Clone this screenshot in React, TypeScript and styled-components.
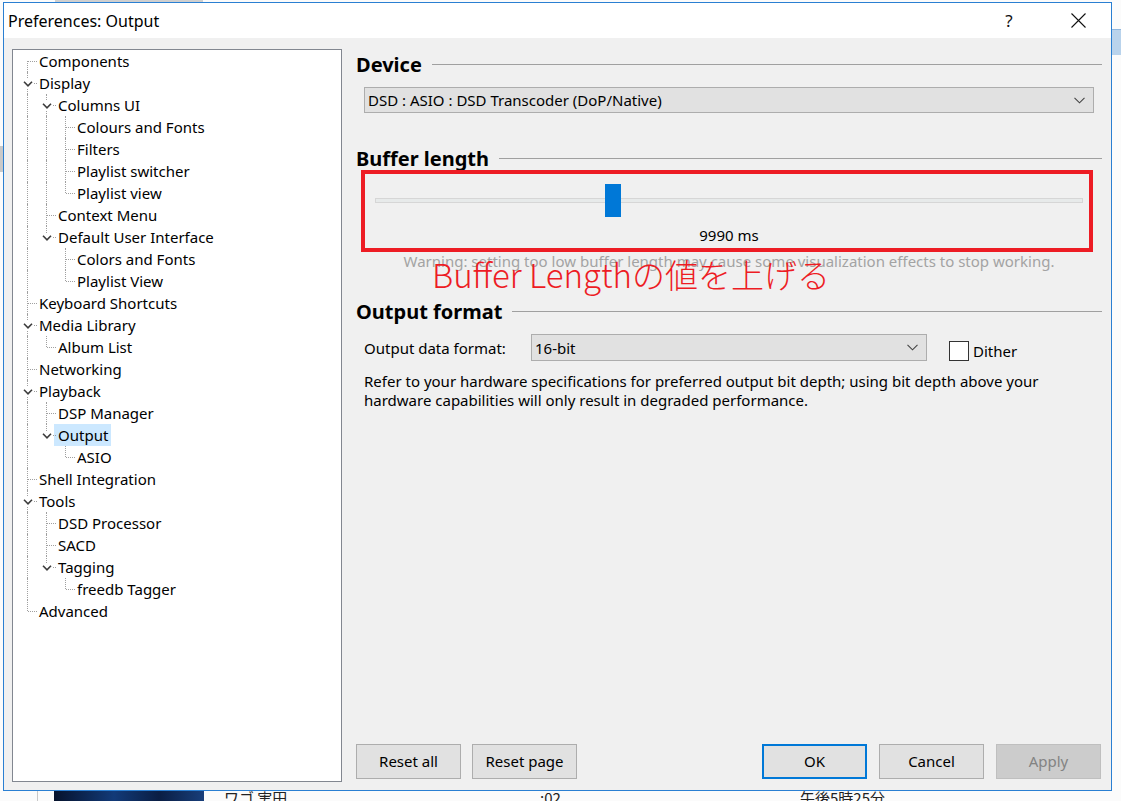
import React from "react";
import styled, { createGlobalStyle } from "styled-components";

const GlobalStyle = createGlobalStyle`
	html, body {
		margin: 0;
		padding: 0;
		background: #fbfbfb;
	}

	body {
		font-family: "Noto Sans", "Open Sans", sans-serif;
		font-size: 15px;
		color: #000;
	}

	* {
		box-sizing: border-box;
	}
`;

// ---- backdrop (the app behind the dialog) ----

const Desktop = styled.div`
	position: relative;
	width: 1121px;
	height: 801px;
	overflow: hidden;
	background: #fbfbfb;
`;

const TopStrip = styled.div`
	position: absolute;
	left: 55px;
	top: 0;
	width: 148px;
	height: 2px;
	background: #cfcfcf;
`;

const SideBand = styled.div`
	position: absolute;
	left: 1112px;
	top: 29px;
	width: 9px;
	height: 26px;
	background: #b9d3ec;
	border-top: 1px solid #8fb6de;
`;

const SideBar = styled.div`
	position: absolute;
	left: 0;
	top: 146px;
	width: 3px;
	height: 26px;
	background: #c9c9c9;
`;

const CoverArt = styled.div`
	position: absolute;
	left: 54px;
	top: 791px;
	width: 150px;
	height: 10px;
	background: linear-gradient(90deg, #06122c, #123a78 40%, #0a1e44 70%, #183e7a);
`;

const GridLine = styled.div`
	position: absolute;
	left: 37px;
	top: 791px;
	width: 1px;
	height: 10px;
	background: #c8c8c8;
`;

const BackText = styled.div<{ $left: number }>`
	position: absolute;
	left: ${p => p.$left}px;
	top: 788px;
	font-family: "Noto Sans CJK JP", "Noto Sans", sans-serif;
	font-size: 15px;
	line-height: 20px;
	color: #222;
	white-space: nowrap;
`;

// ---- dialog window ----

const Window = styled.div`
	position: absolute;
	left: 3px;
	top: 2px;
	width: 1109px;
	height: 789px;
	border: 1px solid #2a7fd2;
	background: #f0f0f0;
	display: flex;
	flex-direction: column;
`;

const TitleBar = styled.div`
	flex: none;
	height: 35px;
	background: #fff;
	display: flex;
	align-items: center;
	padding-left: 4px;
`;

const Title = styled.div`
	flex: 1;
	font-size: 16px;
	color: #000;
`;

const CaptionButton = styled.div<{ $w: number }>`
	width: ${p => p.$w}px;
	height: 100%;
	display: flex;
	align-items: center;
	justify-content: center;
	font-size: 17px;
	color: #111;
`;

const Body = styled.div`
	flex: 1;
	min-height: 0;
	display: flex;
	gap: 14px;
	padding: 11px 9px 8px 8px;
`;

// ---- tree ----

const Tree = styled.div`
	flex: none;
	width: 330px;
	background: #fff;
	border: 1px solid #828790;
	padding: 0 0 0 5px;
`;

const Row = styled.div`
	display: flex;
	align-items: center;
	height: 22px;
`;

type VLine = "none" | "full" | "top" | "bottom";

const Guide = styled.div<{ $v: VLine; $h?: boolean }>`
	position: relative;
	flex: none;
	width: 19px;
	height: 22px;

	&::before {
		content: "";
		display: ${p => (p.$v === "none" ? "none" : "block")};
		position: absolute;
		left: 9px;
		top: ${p => (p.$v === "bottom" ? "11px" : "0")};
		bottom: ${p => (p.$v === "top" ? "11px" : "0")};
		border-left: 1px dotted #a0a0a0;
	}

	&::after {
		content: "";
		display: ${p => (p.$h ? "block" : "none")};
		position: absolute;
		left: 10px;
		right: 0;
		top: 11px;
		border-top: 1px dotted #a0a0a0;
	}
`;

const Expander = styled.span`
	position: absolute;
	z-index: 1;
	left: 4px;
	top: 7px;
	width: 11px;
	height: 9px;
	background: #fff;
	display: flex;
	align-items: center;
	justify-content: center;
`;

const Label = styled.span<{ $selected?: boolean }>`
	margin-left: ${p => (p.$selected ? "-2px" : "1px")};
	padding: 0 3px 0 ${p => (p.$selected ? "4px" : "1px")};
	line-height: 22px;
	white-space: nowrap;
	background: ${p => (p.$selected ? "#cce8ff" : "transparent")};
`;

type Node = { label: string; children?: Node[]; selected?: boolean; };

const tree: Node[] = [
	{ label: "Components" },
	{
		label: "Display", children: [
			{ label: "Columns UI", children: [{ label: "Colours and Fonts" }, { label: "Filters" }, { label: "Playlist switcher" }, { label: "Playlist view" }] },
			{ label: "Context Menu" },
			{ label: "Default User Interface", children: [{ label: "Colors and Fonts" }, { label: "Playlist View" }] },
		]
	},
	{ label: "Keyboard Shortcuts" },
	{ label: "Media Library", children: [{ label: "Album List" }] },
	{ label: "Networking" },
	{ label: "Playback", children: [{ label: "DSP Manager" }, { label: "Output", selected: true, children: [{ label: "ASIO" }] }] },
	{ label: "Shell Integration" },
	{ label: "Tools", children: [{ label: "DSD Processor" }, { label: "SACD" }, { label: "Tagging", children: [{ label: "freedb Tagger" }] }] },
	{ label: "Advanced" },
];

type Flat = { node: Node; cont: boolean[]; self: VLine; };

function flatten(nodes: Node[], cont: boolean[], out: Flat[]) {
	nodes.forEach((n, i) => {
		const last = i === nodes.length - 1;
		let self: VLine = last ? "top" : "full";
		if (cont.length === 0 && i === 0) self = last ? "none" : "bottom";
		out.push({ node: n, cont, self });
		if (n.children) flatten(n.children, [...cont, !last], out);
	});
	return out;
}

function Chevron() {
	return (
		<svg width="10" height="6" viewBox="0 0 10 6">
			<path d="M1 0.8 L5 4.8 L9 0.8" fill="none" stroke="#3c3c3c" strokeWidth="1.6" />
		</svg>
	);
}

function TreeView() {
	const rows = flatten(tree, [], []);
	return (
		<Tree>
			{rows.map((r, i) => (
				<Row key={i}>
					{r.cont.map((c, k) => <Guide key={k} $v={c ? "full" : "none"} />)}
					<Guide $v={r.self} $h>
						{r.node.children ? <Expander><Chevron /></Expander> : null}
					</Guide>
					<Label $selected={r.node.selected}>{r.node.label}</Label>
				</Row>
			))}
		</Tree>
	);
}

// ---- page content ----

const Main = styled.div`
	position: relative;
	flex: 1;
	display: flex;
	flex-direction: column;
	padding: 2px 0 3px;
`;

const Heading = styled.div<{ $mt?: number }>`
	display: flex;
	align-items: center;
	height: 26px;
	margin-top: ${p => p.$mt ?? 0}px;
	font-size: 20px;
	font-weight: 700;
	white-space: nowrap;

	&::after {
		content: "";
		flex: 1;
		margin-left: 10px;
		border-top: 1px solid #a0a0a0;
	}
`;

const Select = styled.div<{ $w?: number; $h: number }>`
	display: flex;
	align-items: center;
	width: ${p => (p.$w ? `${p.$w}px` : "auto")};
	height: ${p => p.$h}px;
	padding: 0 8px 0 3px;
	border: 1px solid #adadad;
	background: #e1e1e1;

	& > span {
		flex: 1;
		white-space: nowrap;
	}
`;

const DeviceSelect = styled(Select)`
	margin: 10px 8px 0;
`;

function DropArrow() {
	return (
		<svg width="11" height="7" viewBox="0 0 11 7">
			<path d="M0.5 0.8 L5.5 5.8 L10.5 0.8" fill="none" stroke="#444" strokeWidth="1.1" />
		</svg>
	);
}

const SliderWrap = styled.div`
	position: relative;
	height: 33px;
	margin: 13px 19px 0;
`;

const Track = styled.div`
	position: absolute;
	left: 0;
	right: 0;
	top: 14px;
	height: 5px;
	background: #e7eaea;
	border: 1px solid #d6d6d6;
`;

const Thumb = styled.div`
	position: absolute;
	top: 0;
	width: 16px;
	height: 33px;
	background: #0078d7;
`;

const ValueText = styled.div`
	margin-top: 8px;
	line-height: 20px;
	text-align: center;
`;

const Warning = styled.div`
	margin-top: 6px;
	line-height: 20px;
	text-align: center;
	color: #a3a3a3;
	white-space: nowrap;
`;

const FormatRow = styled.div`
	display: flex;
	align-items: center;
	margin: 10px 8px 0;
`;

const FieldLabel = styled.div`
	width: 167px;
	flex: none;
`;

const CheckGroup = styled.div`
	display: flex;
	align-items: center;
	gap: 4px;
	align-self: flex-start;
	margin: 7px 0 0 22px;
`;

const CheckBox = styled.div`
	width: 20px;
	height: 20px;
	background: #fff;
	border: 1px solid #333;
`;

const Note = styled.div`
	margin: 11px 8px 0;
	line-height: 19px;
	white-space: nowrap;
`;

const ButtonRow = styled.div`
	display: flex;
	gap: 11px;
	margin-top: auto;
	padding-right: 1px;
`;

const Spacer = styled.div`
	flex: 1;
`;

const ButtonGroup = styled.div`
	display: flex;
	gap: 12px;
`;

const Button = styled.div<{ $kind?: "primary" | "disabled" }>`
	width: 105px;
	height: 35px;
	padding-bottom: 2px;
	display: flex;
	align-items: center;
	justify-content: center;
	background: ${p => (p.$kind === "disabled" ? "#cccccc" : "#e1e1e1")};
	border: ${p => (p.$kind === "primary" ? "2px solid #0078d7" : p.$kind === "disabled" ? "1px solid #bfbfbf" : "1px solid #adadad")};
	color: ${p => (p.$kind === "disabled" ? "#838383" : "#000")};
`;

const Callout = styled.div`
	position: absolute;
	left: 5px;
	top: 121px;
	width: 732px;
	height: 82px;
	border: 4px solid #ed1c24;
	pointer-events: none;
`;

const CalloutText = styled.div`
	position: absolute;
	left: 76px;
	top: 209px;
	font-family: "Noto Sans CJK JP", "Noto Sans", sans-serif;
	font-size: 33px;
	font-weight: 300;
	line-height: 33px;
	color: #ed1c24;
	white-space: nowrap;
	pointer-events: none;
`;

const bufferMs = 9990;
const bufferMax = 30000;

export default function App() {
	const thumbLeft = Math.round((bufferMs / bufferMax) * (707 - 16));

	return (
		<Desktop>
			<GlobalStyle />
			<TopStrip />
			<SideBand />
			<SideBar />
			<GridLine />
			<CoverArt />
			<BackText $left={224}>ワゴ 実田</BackText>
			<BackText $left={540}>:02</BackText>
			<BackText $left={800}>午後5時25分</BackText>

			<Window>
				<TitleBar>
					<Title>Preferences: Output</Title>
					<CaptionButton $w={72}>?</CaptionButton>
					<CaptionButton $w={66}>
						<svg width="15" height="15" viewBox="0 0 15 15">
							<path d="M0.5 0.5 L14.5 14.5 M14.5 0.5 L0.5 14.5" stroke="#111" strokeWidth="1.1" />
						</svg>
					</CaptionButton>
				</TitleBar>

				<Body>
					<TreeView />

					<Main>
						<Heading>Device</Heading>
						<DeviceSelect $h={26}>
							<span>DSD : ASIO : DSD Transcoder (DoP/Native)</span>
							<DropArrow />
						</DeviceSelect>

						<Heading $mt={32}>Buffer length</Heading>
						<SliderWrap>
							<Track />
							<Thumb style={{ left: thumbLeft }} />
						</SliderWrap>
						<ValueText>{bufferMs} ms</ValueText>
						<Warning>Warning: setting too low buffer length may cause some visualization effects to stop working.</Warning>

						<Heading $mt={27}>Output format</Heading>
						<FormatRow>
							<FieldLabel>Output data format:</FieldLabel>
							<Select $w={396} $h={27}>
								<span>16-bit</span>
								<DropArrow />
							</Select>
							<CheckGroup>
								<CheckBox />
								<span>Dither</span>
							</CheckGroup>
						</FormatRow>
						<Note>
							Refer to your hardware specifications for preferred output bit depth; using bit depth above your<br />
							hardware capabilities will only result in degraded performance.
						</Note>

						<ButtonRow>
							<Button>Reset all</Button>
							<Button>Reset page</Button>
							<Spacer />
							<ButtonGroup>
								<Button $kind="primary">OK</Button>
								<Button>Cancel</Button>
								<Button $kind="disabled">Apply</Button>
							</ButtonGroup>
						</ButtonRow>

						<Callout />
						<CalloutText>Buffer Lengthの値を上げる</CalloutText>
					</Main>
				</Body>
			</Window>
		</Desktop>
	);
}
